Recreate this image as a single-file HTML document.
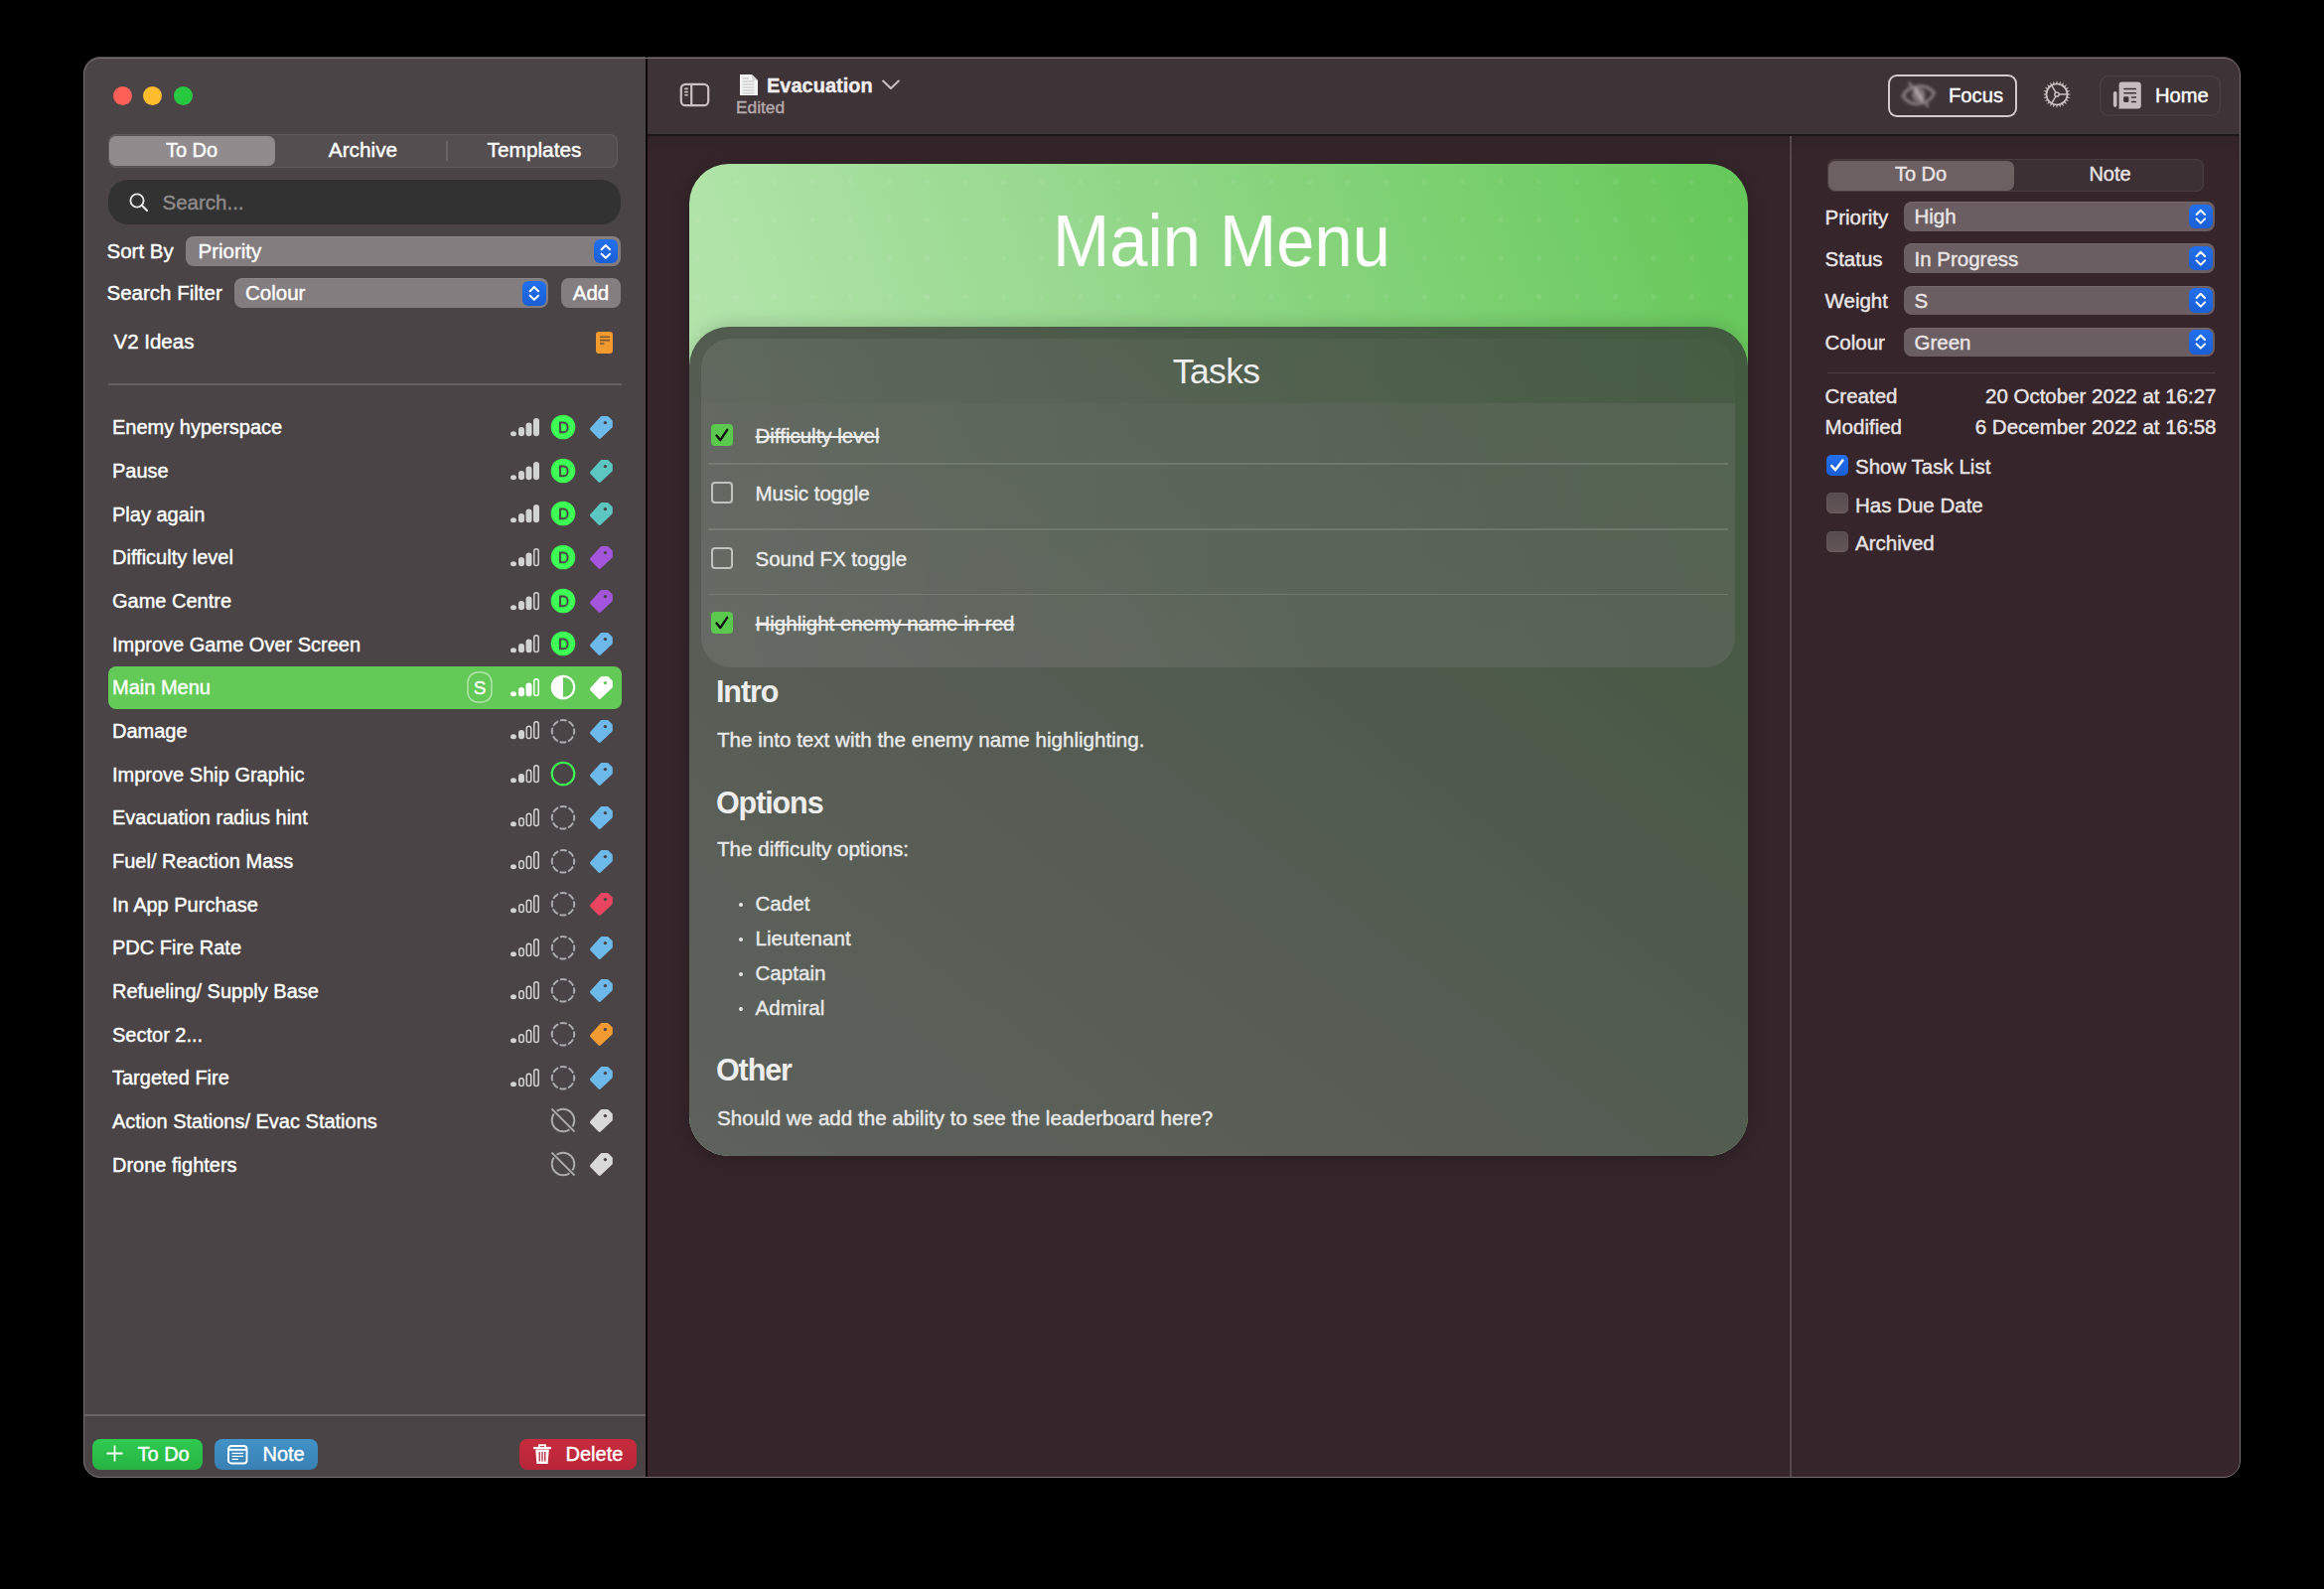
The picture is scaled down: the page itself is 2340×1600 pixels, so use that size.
<!DOCTYPE html>
<html><head><meta charset="utf-8"><style>
html,body{margin:0;padding:0;width:2340px;height:1600px;overflow:hidden;background:#000;}
body{position:relative;font-family:"Liberation Sans", sans-serif;}
.t{position:absolute;white-space:nowrap;-webkit-text-stroke:0.4px currentColor;}
svg{overflow:visible;}
</style></head><body>
<div style="position:absolute;left:84px;top:57px;width:2171px;height:1431px;border-radius:17px;overflow:hidden;background:#36262c;"><div style="position:absolute;left:0;top:0;width:566px;height:100%;background:#4a4446;"></div><div style="position:absolute;left:568px;top:0;right:0;height:78px;background:#3e3337;border-bottom:2px solid #1c1719;"></div><div style="position:absolute;left:568px;top:80px;right:0;height:22px;background:linear-gradient(rgba(0,0,0,0.10),rgba(0,0,0,0));"></div><div style="position:absolute;left:566px;top:0;width:2px;height:100%;background:#0a0809;"></div><div style="position:absolute;left:1718px;top:80px;width:1.5px;bottom:0;background:#54474d;"></div></div><div style="position:absolute;box-sizing:border-box;left:84.35px;top:57.65px;width:2171.2px;height:1430.5px;border-radius:17px;border:1.5px solid #7a7174;"></div><div style="position:absolute;left:114.00px;top:86.70px;width:19.00px;height:19.00px;border-radius:50%;background:#fe5f57;"></div><div style="position:absolute;left:144.40px;top:86.70px;width:19.00px;height:19.00px;border-radius:50%;background:#febc2e;"></div><div style="position:absolute;left:174.60px;top:86.70px;width:19.00px;height:19.00px;border-radius:50%;background:#28c840;"></div><div style="position:absolute;left:109.00px;top:135.00px;width:513.00px;height:34.00px;border-radius:8px;background:#554e51;box-shadow:inset 0 0 0 1px #625b5e;"></div><div style="position:absolute;left:110.00px;top:137.00px;width:167.00px;height:30.00px;border-radius:7px;background:#928b8d;"></div><div style="position:absolute;left:449.00px;top:142.00px;width:1.50px;height:20.00px;background:#6b6466;"></div><div class="t" style="left:193.00px;top:139.17px;font-size:20px;line-height:24px;color:#fff;font-weight:400;transform:translateX(-50%);">To Do</div><div class="t" style="left:365.50px;top:138.39px;font-size:20.8px;line-height:25px;color:#fff;font-weight:400;transform:translateX(-50%);">Archive</div><div class="t" style="left:538.00px;top:138.39px;font-size:20.8px;line-height:25px;color:#fff;font-weight:400;transform:translateX(-50%);">Templates</div><div style="position:absolute;left:109.00px;top:181.00px;width:516.00px;height:44.60px;border-radius:20px;background:#323232;"></div><svg style="position:absolute;left:128.00px;top:192.00px;" width="24" height="24" viewBox="0 0 24 24"><circle cx="10" cy="10" r="6.6" fill="none" stroke="#e6e6e6" stroke-width="1.9"/><line x1="14.8" y1="14.8" x2="20" y2="20" stroke="#e6e6e6" stroke-width="2.2" stroke-linecap="round"/></svg><div class="t" style="left:163.50px;top:191.49px;font-size:20.5px;line-height:25px;color:#8f8b8c;font-weight:400;">Search...</div><div class="t" style="left:107.50px;top:240.39px;font-size:20.5px;line-height:25px;color:#fff;font-weight:400;">Sort By</div><div style="position:absolute;left:187.30px;top:238.00px;width:437.70px;height:30.00px;border-radius:8px;background:#847d80;box-shadow:inset 0 1px 0 rgba(255,255,255,0.08);"></div><div style="position:absolute;left:598.00px;top:240.60px;width:23.70px;height:24.80px;border-radius:6px;background:linear-gradient(#2270ee,#1a5fd6);"></div><svg style="position:absolute;left:598.00px;top:240.60px;" width="24" height="25" viewBox="0 0 24 25"><path d="M7.6 10.20 L11.85 6.00 L16.1 10.20 M7.6 14.60 L11.85 18.80 L16.1 14.60" fill="none" stroke="#fff" stroke-width="2" stroke-linecap="round" stroke-linejoin="round"/></svg><div class="t" style="left:199.50px;top:239.89px;font-size:20.5px;line-height:25px;color:#fff;font-weight:400;">Priority</div><div class="t" style="left:107.50px;top:282.39px;font-size:20.5px;line-height:25px;color:#fff;font-weight:400;">Search Filter</div><div style="position:absolute;left:235.80px;top:280.30px;width:316.50px;height:30.00px;border-radius:8px;background:#847d80;box-shadow:inset 0 1px 0 rgba(255,255,255,0.08);"></div><div style="position:absolute;left:526.00px;top:282.90px;width:23.70px;height:24.80px;border-radius:6px;background:linear-gradient(#2270ee,#1a5fd6);"></div><svg style="position:absolute;left:526.00px;top:282.90px;" width="24" height="25" viewBox="0 0 24 25"><path d="M7.6 10.20 L11.85 6.00 L16.1 10.20 M7.6 14.60 L11.85 18.80 L16.1 14.60" fill="none" stroke="#fff" stroke-width="2" stroke-linecap="round" stroke-linejoin="round"/></svg><div class="t" style="left:247.00px;top:281.89px;font-size:20.5px;line-height:25px;color:#fff;font-weight:400;">Colour</div><div style="position:absolute;left:565.00px;top:280.30px;width:60.00px;height:30.00px;border-radius:8px;background:#857e81;"></div><div class="t" style="left:595.00px;top:281.89px;font-size:20.5px;line-height:25px;color:#fff;font-weight:400;transform:translateX(-50%);">Add</div><div class="t" style="left:114.50px;top:331.39px;font-size:20.5px;line-height:25px;color:#fff;font-weight:400;">V2 Ideas</div><div style="position:absolute;left:599.70px;top:333.50px;width:17.60px;height:22.00px;border-radius:3px;background:#f29a30;"></div><svg style="position:absolute;left:599.70px;top:333.50px;" width="18" height="22" viewBox="0 0 18 22"><path d="M4 5.2H14M4 8.6H14M4 12H8.5" stroke="#6b4a2c" stroke-width="1.6" opacity="0.85"/></svg><div style="position:absolute;left:109.00px;top:386.00px;width:516.60px;height:2.00px;background:#666063;"></div><div class="t" style="left:113.00px;top:418.47px;font-size:20px;line-height:24px;color:#fff;font-weight:400;">Enemy hyperspace</div><svg style="position:absolute;left:514.00px;top:420.90px;" width="30" height="18.30000000000001" viewBox="0 0 30 18.30000000000001"><ellipse cx="3" cy="15.70" rx="3" ry="2.5" fill="#d2d2d2"/><rect x="8" y="9.00" width="6" height="9.3" rx="3" fill="#d2d2d2"/><rect x="15.5" y="4.50" width="6" height="13.8" rx="3" fill="#d2d2d2"/><rect x="23" y="0.00" width="6" height="18.3" rx="3" fill="#d2d2d2"/></svg><svg style="position:absolute;left:554.00px;top:417.00px;" width="26" height="26" viewBox="0 0 26 26"><circle cx="13" cy="13" r="12.3" fill="#3dfc53"/><path d="M10.0 8.55h3.5a4.1 4.85 0 0 1 0 9.7h-3.5z" fill="none" stroke="#4a4446" stroke-width="1.9"/></svg><svg style="position:absolute;left:593.00px;top:418.00px;" width="25" height="25" viewBox="0 0 25 25"><path d="M12.84 3.00 L18.53 3.00 L21.90 6.30 L21.90 11.48 L10.75 21.94 L2.91 13.95Z" fill="#6cb9ea" stroke="#6cb9ea" stroke-width="3.8" stroke-linejoin="round"/><circle cx="16.4" cy="7.6" r="1.7" fill="#4a4446"/></svg><div class="t" style="left:113.00px;top:462.12px;font-size:20px;line-height:24px;color:#fff;font-weight:400;">Pause</div><svg style="position:absolute;left:514.00px;top:464.55px;" width="30" height="18.30000000000001" viewBox="0 0 30 18.30000000000001"><ellipse cx="3" cy="15.70" rx="3" ry="2.5" fill="#d2d2d2"/><rect x="8" y="9.00" width="6" height="9.3" rx="3" fill="#d2d2d2"/><rect x="15.5" y="4.50" width="6" height="13.8" rx="3" fill="#d2d2d2"/><rect x="23" y="0.00" width="6" height="18.3" rx="3" fill="#d2d2d2"/></svg><svg style="position:absolute;left:554.00px;top:460.65px;" width="26" height="26" viewBox="0 0 26 26"><circle cx="13" cy="13" r="12.3" fill="#3dfc53"/><path d="M10.0 8.55h3.5a4.1 4.85 0 0 1 0 9.7h-3.5z" fill="none" stroke="#4a4446" stroke-width="1.9"/></svg><svg style="position:absolute;left:593.00px;top:461.65px;" width="25" height="25" viewBox="0 0 25 25"><path d="M12.84 3.00 L18.53 3.00 L21.90 6.30 L21.90 11.48 L10.75 21.94 L2.91 13.95Z" fill="#5cc6c0" stroke="#5cc6c0" stroke-width="3.8" stroke-linejoin="round"/><circle cx="16.4" cy="7.6" r="1.7" fill="#4a4446"/></svg><div class="t" style="left:113.00px;top:505.77px;font-size:20px;line-height:24px;color:#fff;font-weight:400;">Play again</div><svg style="position:absolute;left:514.00px;top:508.20px;" width="30" height="18.299999999999955" viewBox="0 0 30 18.299999999999955"><ellipse cx="3" cy="15.70" rx="3" ry="2.5" fill="#d2d2d2"/><rect x="8" y="9.00" width="6" height="9.3" rx="3" fill="#d2d2d2"/><rect x="15.5" y="4.50" width="6" height="13.8" rx="3" fill="#d2d2d2"/><rect x="23" y="-0.00" width="6" height="18.3" rx="3" fill="#d2d2d2"/></svg><svg style="position:absolute;left:554.00px;top:504.30px;" width="26" height="26" viewBox="0 0 26 26"><circle cx="13" cy="13" r="12.3" fill="#3dfc53"/><path d="M10.0 8.55h3.5a4.1 4.85 0 0 1 0 9.7h-3.5z" fill="none" stroke="#4a4446" stroke-width="1.9"/></svg><svg style="position:absolute;left:593.00px;top:505.30px;" width="25" height="25" viewBox="0 0 25 25"><path d="M12.84 3.00 L18.53 3.00 L21.90 6.30 L21.90 11.48 L10.75 21.94 L2.91 13.95Z" fill="#5cc6c0" stroke="#5cc6c0" stroke-width="3.8" stroke-linejoin="round"/><circle cx="16.4" cy="7.6" r="1.7" fill="#4a4446"/></svg><div class="t" style="left:113.00px;top:549.42px;font-size:20px;line-height:24px;color:#fff;font-weight:400;">Difficulty level</div><svg style="position:absolute;left:514.00px;top:551.85px;" width="30" height="18.299999999999955" viewBox="0 0 30 18.299999999999955"><ellipse cx="3" cy="15.70" rx="3" ry="2.5" fill="#d2d2d2"/><rect x="8" y="9.00" width="6" height="9.3" rx="3" fill="#d2d2d2"/><rect x="15.5" y="4.50" width="6" height="13.8" rx="3" fill="#d2d2d2"/><rect x="23.75" y="0.75" width="4.5" height="16.8" rx="2.25" fill="none" stroke="#d2d2d2" stroke-width="1.5"/></svg><svg style="position:absolute;left:554.00px;top:547.95px;" width="26" height="26" viewBox="0 0 26 26"><circle cx="13" cy="13" r="12.3" fill="#3dfc53"/><path d="M10.0 8.55h3.5a4.1 4.85 0 0 1 0 9.7h-3.5z" fill="none" stroke="#4a4446" stroke-width="1.9"/></svg><svg style="position:absolute;left:593.00px;top:548.95px;" width="25" height="25" viewBox="0 0 25 25"><path d="M12.84 3.00 L18.53 3.00 L21.90 6.30 L21.90 11.48 L10.75 21.94 L2.91 13.95Z" fill="#a355dc" stroke="#a355dc" stroke-width="3.8" stroke-linejoin="round"/><circle cx="16.4" cy="7.6" r="1.7" fill="#4a4446"/></svg><div class="t" style="left:113.00px;top:593.07px;font-size:20px;line-height:24px;color:#fff;font-weight:400;">Game Centre</div><svg style="position:absolute;left:514.00px;top:595.50px;" width="30" height="18.299999999999955" viewBox="0 0 30 18.299999999999955"><ellipse cx="3" cy="15.70" rx="3" ry="2.5" fill="#d2d2d2"/><rect x="8" y="9.00" width="6" height="9.3" rx="3" fill="#d2d2d2"/><rect x="15.5" y="4.50" width="6" height="13.8" rx="3" fill="#d2d2d2"/><rect x="23.75" y="0.75" width="4.5" height="16.8" rx="2.25" fill="none" stroke="#d2d2d2" stroke-width="1.5"/></svg><svg style="position:absolute;left:554.00px;top:591.60px;" width="26" height="26" viewBox="0 0 26 26"><circle cx="13" cy="13" r="12.3" fill="#3dfc53"/><path d="M10.0 8.55h3.5a4.1 4.85 0 0 1 0 9.7h-3.5z" fill="none" stroke="#4a4446" stroke-width="1.9"/></svg><svg style="position:absolute;left:593.00px;top:592.60px;" width="25" height="25" viewBox="0 0 25 25"><path d="M12.84 3.00 L18.53 3.00 L21.90 6.30 L21.90 11.48 L10.75 21.94 L2.91 13.95Z" fill="#a355dc" stroke="#a355dc" stroke-width="3.8" stroke-linejoin="round"/><circle cx="16.4" cy="7.6" r="1.7" fill="#4a4446"/></svg><div class="t" style="left:113.00px;top:636.72px;font-size:20px;line-height:24px;color:#fff;font-weight:400;">Improve Game Over Screen</div><svg style="position:absolute;left:514.00px;top:639.15px;" width="30" height="18.299999999999955" viewBox="0 0 30 18.299999999999955"><ellipse cx="3" cy="15.70" rx="3" ry="2.5" fill="#d2d2d2"/><rect x="8" y="9.00" width="6" height="9.3" rx="3" fill="#d2d2d2"/><rect x="15.5" y="4.50" width="6" height="13.8" rx="3" fill="#d2d2d2"/><rect x="23.75" y="0.75" width="4.5" height="16.8" rx="2.25" fill="none" stroke="#d2d2d2" stroke-width="1.5"/></svg><svg style="position:absolute;left:554.00px;top:635.25px;" width="26" height="26" viewBox="0 0 26 26"><circle cx="13" cy="13" r="12.3" fill="#3dfc53"/><path d="M10.0 8.55h3.5a4.1 4.85 0 0 1 0 9.7h-3.5z" fill="none" stroke="#4a4446" stroke-width="1.9"/></svg><svg style="position:absolute;left:593.00px;top:636.25px;" width="25" height="25" viewBox="0 0 25 25"><path d="M12.84 3.00 L18.53 3.00 L21.90 6.30 L21.90 11.48 L10.75 21.94 L2.91 13.95Z" fill="#6cb9ea" stroke="#6cb9ea" stroke-width="3.8" stroke-linejoin="round"/><circle cx="16.4" cy="7.6" r="1.7" fill="#4a4446"/></svg><div style="position:absolute;left:109.00px;top:670.60px;width:516.80px;height:43.60px;border-radius:8px;background:#63c957;"></div><svg style="position:absolute;left:470.00px;top:676.30px;" width="26" height="32" viewBox="0 0 26 32"><rect x="1" y="1" width="24" height="30" rx="10" fill="none" stroke="rgba(255,255,255,0.5)" stroke-width="1.5"/></svg><div class="t" style="left:483.00px;top:681.21px;font-size:19px;line-height:23px;color:#fff;font-weight:400;transform:translateX(-50%);">S</div><div class="t" style="left:113.00px;top:680.37px;font-size:20px;line-height:24px;color:#fff;font-weight:400;">Main Menu</div><svg style="position:absolute;left:514.00px;top:682.80px;" width="30" height="18.299999999999955" viewBox="0 0 30 18.299999999999955"><ellipse cx="3" cy="15.70" rx="3" ry="2.5" fill="#ffffff"/><rect x="8" y="9.00" width="6" height="9.3" rx="3" fill="#ffffff"/><rect x="15.5" y="4.50" width="6" height="13.8" rx="3" fill="#ffffff"/><rect x="23.75" y="0.75" width="4.5" height="16.8" rx="2.25" fill="none" stroke="#ffffff" stroke-width="1.5"/></svg><svg style="position:absolute;left:554.00px;top:678.90px;" width="26" height="26" viewBox="0 0 26 26"><circle cx="13" cy="13" r="11.2" fill="none" stroke="#fff" stroke-width="2.2"/><path d="M13 1.8 A11.2 11.2 0 0 0 13 24.2 Z" fill="#fff"/></svg><svg style="position:absolute;left:593.00px;top:679.90px;" width="25" height="25" viewBox="0 0 25 25"><path d="M12.84 3.00 L18.53 3.00 L21.90 6.30 L21.90 11.48 L10.75 21.94 L2.91 13.95Z" fill="#ffffff" stroke="#ffffff" stroke-width="3.8" stroke-linejoin="round"/><circle cx="16.4" cy="7.6" r="1.7" fill="#63c957"/></svg><div class="t" style="left:113.00px;top:724.02px;font-size:20px;line-height:24px;color:#fff;font-weight:400;">Damage</div><svg style="position:absolute;left:514.00px;top:726.45px;" width="30" height="18.299999999999955" viewBox="0 0 30 18.299999999999955"><ellipse cx="3" cy="15.70" rx="3" ry="2.5" fill="#d2d2d2"/><rect x="8" y="9.00" width="6" height="9.3" rx="3" fill="#d2d2d2"/><rect x="16.25" y="5.25" width="4.5" height="12.3" rx="2.25" fill="none" stroke="#d2d2d2" stroke-width="1.5"/><rect x="23.75" y="0.75" width="4.5" height="16.8" rx="2.25" fill="none" stroke="#d2d2d2" stroke-width="1.5"/></svg><svg style="position:absolute;left:554.00px;top:722.55px;" width="26" height="26" viewBox="0 0 26 26"><circle cx="13" cy="13.3" r="11.2" fill="none" stroke="#ababaf" stroke-width="2" stroke-linecap="round" stroke-dasharray="5.3 3.496" stroke-dashoffset="2.65"/></svg><svg style="position:absolute;left:593.00px;top:723.55px;" width="25" height="25" viewBox="0 0 25 25"><path d="M12.84 3.00 L18.53 3.00 L21.90 6.30 L21.90 11.48 L10.75 21.94 L2.91 13.95Z" fill="#6cb9ea" stroke="#6cb9ea" stroke-width="3.8" stroke-linejoin="round"/><circle cx="16.4" cy="7.6" r="1.7" fill="#4a4446"/></svg><div class="t" style="left:113.00px;top:767.67px;font-size:20px;line-height:24px;color:#fff;font-weight:400;">Improve Ship Graphic</div><svg style="position:absolute;left:514.00px;top:770.10px;" width="30" height="18.299999999999955" viewBox="0 0 30 18.299999999999955"><ellipse cx="3" cy="15.70" rx="3" ry="2.5" fill="#d2d2d2"/><rect x="8" y="9.00" width="6" height="9.3" rx="3" fill="#d2d2d2"/><rect x="16.25" y="5.25" width="4.5" height="12.3" rx="2.25" fill="none" stroke="#d2d2d2" stroke-width="1.5"/><rect x="23.75" y="0.75" width="4.5" height="16.8" rx="2.25" fill="none" stroke="#d2d2d2" stroke-width="1.5"/></svg><svg style="position:absolute;left:554.00px;top:766.20px;" width="26" height="26" viewBox="0 0 26 26"><circle cx="13" cy="13" r="11.3" fill="none" stroke="#3dfc53" stroke-width="2.1"/></svg><svg style="position:absolute;left:593.00px;top:767.20px;" width="25" height="25" viewBox="0 0 25 25"><path d="M12.84 3.00 L18.53 3.00 L21.90 6.30 L21.90 11.48 L10.75 21.94 L2.91 13.95Z" fill="#6cb9ea" stroke="#6cb9ea" stroke-width="3.8" stroke-linejoin="round"/><circle cx="16.4" cy="7.6" r="1.7" fill="#4a4446"/></svg><div class="t" style="left:113.00px;top:811.32px;font-size:20px;line-height:24px;color:#fff;font-weight:400;">Evacuation radius hint</div><svg style="position:absolute;left:514.00px;top:813.75px;" width="30" height="18.299999999999955" viewBox="0 0 30 18.299999999999955"><ellipse cx="3" cy="15.70" rx="3" ry="2.5" fill="#d2d2d2"/><rect x="8.75" y="9.75" width="4.5" height="7.800000000000001" rx="2.25" fill="none" stroke="#d2d2d2" stroke-width="1.5"/><rect x="16.25" y="5.25" width="4.5" height="12.3" rx="2.25" fill="none" stroke="#d2d2d2" stroke-width="1.5"/><rect x="23.75" y="0.75" width="4.5" height="16.8" rx="2.25" fill="none" stroke="#d2d2d2" stroke-width="1.5"/></svg><svg style="position:absolute;left:554.00px;top:809.85px;" width="26" height="26" viewBox="0 0 26 26"><circle cx="13" cy="13.3" r="11.2" fill="none" stroke="#ababaf" stroke-width="2" stroke-linecap="round" stroke-dasharray="5.3 3.496" stroke-dashoffset="2.65"/></svg><svg style="position:absolute;left:593.00px;top:810.85px;" width="25" height="25" viewBox="0 0 25 25"><path d="M12.84 3.00 L18.53 3.00 L21.90 6.30 L21.90 11.48 L10.75 21.94 L2.91 13.95Z" fill="#6cb9ea" stroke="#6cb9ea" stroke-width="3.8" stroke-linejoin="round"/><circle cx="16.4" cy="7.6" r="1.7" fill="#4a4446"/></svg><div class="t" style="left:113.00px;top:854.97px;font-size:20px;line-height:24px;color:#fff;font-weight:400;">Fuel/ Reaction Mass</div><svg style="position:absolute;left:514.00px;top:857.40px;" width="30" height="18.299999999999955" viewBox="0 0 30 18.299999999999955"><ellipse cx="3" cy="15.70" rx="3" ry="2.5" fill="#d2d2d2"/><rect x="8.75" y="9.75" width="4.5" height="7.800000000000001" rx="2.25" fill="none" stroke="#d2d2d2" stroke-width="1.5"/><rect x="16.25" y="5.25" width="4.5" height="12.3" rx="2.25" fill="none" stroke="#d2d2d2" stroke-width="1.5"/><rect x="23.75" y="0.75" width="4.5" height="16.8" rx="2.25" fill="none" stroke="#d2d2d2" stroke-width="1.5"/></svg><svg style="position:absolute;left:554.00px;top:853.50px;" width="26" height="26" viewBox="0 0 26 26"><circle cx="13" cy="13.3" r="11.2" fill="none" stroke="#ababaf" stroke-width="2" stroke-linecap="round" stroke-dasharray="5.3 3.496" stroke-dashoffset="2.65"/></svg><svg style="position:absolute;left:593.00px;top:854.50px;" width="25" height="25" viewBox="0 0 25 25"><path d="M12.84 3.00 L18.53 3.00 L21.90 6.30 L21.90 11.48 L10.75 21.94 L2.91 13.95Z" fill="#6cb9ea" stroke="#6cb9ea" stroke-width="3.8" stroke-linejoin="round"/><circle cx="16.4" cy="7.6" r="1.7" fill="#4a4446"/></svg><div class="t" style="left:113.00px;top:898.62px;font-size:20px;line-height:24px;color:#fff;font-weight:400;">In App Purchase</div><svg style="position:absolute;left:514.00px;top:901.05px;" width="30" height="18.299999999999955" viewBox="0 0 30 18.299999999999955"><ellipse cx="3" cy="15.70" rx="3" ry="2.5" fill="#d2d2d2"/><rect x="8.75" y="9.75" width="4.5" height="7.800000000000001" rx="2.25" fill="none" stroke="#d2d2d2" stroke-width="1.5"/><rect x="16.25" y="5.25" width="4.5" height="12.3" rx="2.25" fill="none" stroke="#d2d2d2" stroke-width="1.5"/><rect x="23.75" y="0.75" width="4.5" height="16.8" rx="2.25" fill="none" stroke="#d2d2d2" stroke-width="1.5"/></svg><svg style="position:absolute;left:554.00px;top:897.15px;" width="26" height="26" viewBox="0 0 26 26"><circle cx="13" cy="13.3" r="11.2" fill="none" stroke="#ababaf" stroke-width="2" stroke-linecap="round" stroke-dasharray="5.3 3.496" stroke-dashoffset="2.65"/></svg><svg style="position:absolute;left:593.00px;top:898.15px;" width="25" height="25" viewBox="0 0 25 25"><path d="M12.84 3.00 L18.53 3.00 L21.90 6.30 L21.90 11.48 L10.75 21.94 L2.91 13.95Z" fill="#ea4560" stroke="#ea4560" stroke-width="3.8" stroke-linejoin="round"/><circle cx="16.4" cy="7.6" r="1.7" fill="#4a4446"/></svg><div class="t" style="left:113.00px;top:942.27px;font-size:20px;line-height:24px;color:#fff;font-weight:400;">PDC Fire Rate</div><svg style="position:absolute;left:514.00px;top:944.70px;" width="30" height="18.299999999999955" viewBox="0 0 30 18.299999999999955"><ellipse cx="3" cy="15.70" rx="3" ry="2.5" fill="#d2d2d2"/><rect x="8.75" y="9.75" width="4.5" height="7.800000000000001" rx="2.25" fill="none" stroke="#d2d2d2" stroke-width="1.5"/><rect x="16.25" y="5.25" width="4.5" height="12.3" rx="2.25" fill="none" stroke="#d2d2d2" stroke-width="1.5"/><rect x="23.75" y="0.75" width="4.5" height="16.8" rx="2.25" fill="none" stroke="#d2d2d2" stroke-width="1.5"/></svg><svg style="position:absolute;left:554.00px;top:940.80px;" width="26" height="26" viewBox="0 0 26 26"><circle cx="13" cy="13.3" r="11.2" fill="none" stroke="#ababaf" stroke-width="2" stroke-linecap="round" stroke-dasharray="5.3 3.496" stroke-dashoffset="2.65"/></svg><svg style="position:absolute;left:593.00px;top:941.80px;" width="25" height="25" viewBox="0 0 25 25"><path d="M12.84 3.00 L18.53 3.00 L21.90 6.30 L21.90 11.48 L10.75 21.94 L2.91 13.95Z" fill="#6cb9ea" stroke="#6cb9ea" stroke-width="3.8" stroke-linejoin="round"/><circle cx="16.4" cy="7.6" r="1.7" fill="#4a4446"/></svg><div class="t" style="left:113.00px;top:985.92px;font-size:20px;line-height:24px;color:#fff;font-weight:400;">Refueling/ Supply Base</div><svg style="position:absolute;left:514.00px;top:988.35px;" width="30" height="18.299999999999955" viewBox="0 0 30 18.299999999999955"><ellipse cx="3" cy="15.70" rx="3" ry="2.5" fill="#d2d2d2"/><rect x="8.75" y="9.75" width="4.5" height="7.800000000000001" rx="2.25" fill="none" stroke="#d2d2d2" stroke-width="1.5"/><rect x="16.25" y="5.25" width="4.5" height="12.3" rx="2.25" fill="none" stroke="#d2d2d2" stroke-width="1.5"/><rect x="23.75" y="0.75" width="4.5" height="16.8" rx="2.25" fill="none" stroke="#d2d2d2" stroke-width="1.5"/></svg><svg style="position:absolute;left:554.00px;top:984.45px;" width="26" height="26" viewBox="0 0 26 26"><circle cx="13" cy="13.3" r="11.2" fill="none" stroke="#ababaf" stroke-width="2" stroke-linecap="round" stroke-dasharray="5.3 3.496" stroke-dashoffset="2.65"/></svg><svg style="position:absolute;left:593.00px;top:985.45px;" width="25" height="25" viewBox="0 0 25 25"><path d="M12.84 3.00 L18.53 3.00 L21.90 6.30 L21.90 11.48 L10.75 21.94 L2.91 13.95Z" fill="#6cb9ea" stroke="#6cb9ea" stroke-width="3.8" stroke-linejoin="round"/><circle cx="16.4" cy="7.6" r="1.7" fill="#4a4446"/></svg><div class="t" style="left:113.00px;top:1029.57px;font-size:20px;line-height:24px;color:#fff;font-weight:400;">Sector 2...</div><svg style="position:absolute;left:514.00px;top:1032.00px;" width="30" height="18.299999999999955" viewBox="0 0 30 18.299999999999955"><ellipse cx="3" cy="15.70" rx="3" ry="2.5" fill="#d2d2d2"/><rect x="8.75" y="9.75" width="4.5" height="7.800000000000001" rx="2.25" fill="none" stroke="#d2d2d2" stroke-width="1.5"/><rect x="16.25" y="5.25" width="4.5" height="12.3" rx="2.25" fill="none" stroke="#d2d2d2" stroke-width="1.5"/><rect x="23.75" y="0.75" width="4.5" height="16.8" rx="2.25" fill="none" stroke="#d2d2d2" stroke-width="1.5"/></svg><svg style="position:absolute;left:554.00px;top:1028.10px;" width="26" height="26" viewBox="0 0 26 26"><circle cx="13" cy="13.3" r="11.2" fill="none" stroke="#ababaf" stroke-width="2" stroke-linecap="round" stroke-dasharray="5.3 3.496" stroke-dashoffset="2.65"/></svg><svg style="position:absolute;left:593.00px;top:1029.10px;" width="25" height="25" viewBox="0 0 25 25"><path d="M12.84 3.00 L18.53 3.00 L21.90 6.30 L21.90 11.48 L10.75 21.94 L2.91 13.95Z" fill="#f29b32" stroke="#f29b32" stroke-width="3.8" stroke-linejoin="round"/><circle cx="16.4" cy="7.6" r="1.7" fill="#4a4446"/></svg><div class="t" style="left:113.00px;top:1073.22px;font-size:20px;line-height:24px;color:#fff;font-weight:400;">Targeted Fire</div><svg style="position:absolute;left:514.00px;top:1075.65px;" width="30" height="18.299999999999955" viewBox="0 0 30 18.299999999999955"><ellipse cx="3" cy="15.70" rx="3" ry="2.5" fill="#d2d2d2"/><rect x="8.75" y="9.75" width="4.5" height="7.800000000000001" rx="2.25" fill="none" stroke="#d2d2d2" stroke-width="1.5"/><rect x="16.25" y="5.25" width="4.5" height="12.3" rx="2.25" fill="none" stroke="#d2d2d2" stroke-width="1.5"/><rect x="23.75" y="0.75" width="4.5" height="16.8" rx="2.25" fill="none" stroke="#d2d2d2" stroke-width="1.5"/></svg><svg style="position:absolute;left:554.00px;top:1071.75px;" width="26" height="26" viewBox="0 0 26 26"><circle cx="13" cy="13.3" r="11.2" fill="none" stroke="#ababaf" stroke-width="2" stroke-linecap="round" stroke-dasharray="5.3 3.496" stroke-dashoffset="2.65"/></svg><svg style="position:absolute;left:593.00px;top:1072.75px;" width="25" height="25" viewBox="0 0 25 25"><path d="M12.84 3.00 L18.53 3.00 L21.90 6.30 L21.90 11.48 L10.75 21.94 L2.91 13.95Z" fill="#6cb9ea" stroke="#6cb9ea" stroke-width="3.8" stroke-linejoin="round"/><circle cx="16.4" cy="7.6" r="1.7" fill="#4a4446"/></svg><div class="t" style="left:113.00px;top:1116.87px;font-size:20px;line-height:24px;color:#fff;font-weight:400;">Action Stations/ Evac Stations</div><svg style="position:absolute;left:554.00px;top:1115.40px;" width="26" height="26" viewBox="0 0 26 26"><circle cx="13" cy="13" r="11.3" fill="none" stroke="#aeabac" stroke-width="1.9"/><line x1="2" y1="2" x2="24" y2="24" stroke="#4a4446" stroke-width="4"/><line x1="1.5" y1="1.5" x2="24.5" y2="24.5" stroke="#aeabac" stroke-width="1.8"/></svg><svg style="position:absolute;left:593.00px;top:1116.40px;" width="25" height="25" viewBox="0 0 25 25"><path d="M12.84 3.00 L18.53 3.00 L21.90 6.30 L21.90 11.48 L10.75 21.94 L2.91 13.95Z" fill="#d9d9d9" stroke="#d9d9d9" stroke-width="3.8" stroke-linejoin="round"/><circle cx="16.4" cy="7.6" r="1.7" fill="#4a4446"/></svg><div class="t" style="left:113.00px;top:1160.52px;font-size:20px;line-height:24px;color:#fff;font-weight:400;">Drone fighters</div><svg style="position:absolute;left:554.00px;top:1159.05px;" width="26" height="26" viewBox="0 0 26 26"><circle cx="13" cy="13" r="11.3" fill="none" stroke="#aeabac" stroke-width="1.9"/><line x1="2" y1="2" x2="24" y2="24" stroke="#4a4446" stroke-width="4"/><line x1="1.5" y1="1.5" x2="24.5" y2="24.5" stroke="#aeabac" stroke-width="1.8"/></svg><svg style="position:absolute;left:593.00px;top:1160.05px;" width="25" height="25" viewBox="0 0 25 25"><path d="M12.84 3.00 L18.53 3.00 L21.90 6.30 L21.90 11.48 L10.75 21.94 L2.91 13.95Z" fill="#d9d9d9" stroke="#d9d9d9" stroke-width="3.8" stroke-linejoin="round"/><circle cx="16.4" cy="7.6" r="1.7" fill="#4a4446"/></svg><div style="position:absolute;left:84.00px;top:1423.50px;width:566.00px;height:2.00px;background:#6b6467;"></div><div style="position:absolute;left:93.00px;top:1449.00px;width:111.00px;height:30.60px;border-radius:8px;background:linear-gradient(#2fcb50,#27b343);"></div><svg style="position:absolute;left:106.00px;top:1454.00px;" width="19" height="19" viewBox="0 0 19 19"><path d="M9.5 1.5V17.5M1.5 9.5H17.5" stroke="#fff" stroke-width="1.8"/></svg><div class="t" style="left:138.50px;top:1451.57px;font-size:20px;line-height:24px;color:#fff;font-weight:400;">To Do</div><div style="position:absolute;left:215.70px;top:1449.00px;width:104.30px;height:30.60px;border-radius:8px;background:linear-gradient(#4193c8,#3880b3);"></div><svg style="position:absolute;left:229.00px;top:1454.50px;" width="21" height="19" viewBox="0 0 21 19"><rect x="1" y="1" width="18.5" height="17.5" rx="3" fill="none" stroke="#fff" stroke-width="1.9"/><path d="M1 4.8H19.5" stroke="#fff" stroke-width="1.9"/><path d="M4.5 8.3H16M4.5 11.3H16M4.5 14.3H11" stroke="#fff" stroke-width="1.3"/></svg><div class="t" style="left:264.50px;top:1451.57px;font-size:20px;line-height:24px;color:#fff;font-weight:400;">Note</div><div style="position:absolute;left:522.70px;top:1449.00px;width:118.30px;height:30.60px;border-radius:8px;background:linear-gradient(#c82b3e,#b82538);"></div><svg style="position:absolute;left:535.00px;top:1453.00px;" width="22" height="23" viewBox="0 0 22 23"><path d="M2 5H20" stroke="#fff" stroke-width="2.2"/><path d="M8 4.5V2.2H14V4.5" fill="none" stroke="#fff" stroke-width="1.8"/><path d="M4.2 6.5L5.4 21H16.6L17.8 6.5Z" fill="#fff"/><path d="M8.2 9V18.5M11 9V18.5M13.8 9V18.5" stroke="#b92639" stroke-width="1.3"/></svg><div class="t" style="left:569.50px;top:1451.57px;font-size:20px;line-height:24px;color:#fff;font-weight:400;">Delete</div><svg style="position:absolute;left:684.00px;top:83.00px;" width="32" height="26" viewBox="0 0 32 26"><rect x="1.8" y="1.8" width="27.4" height="21.4" rx="4.5" fill="none" stroke="#cbbfc1" stroke-width="2.2"/><path d="M12.2 2V23" stroke="#cbbfc1" stroke-width="2.2"/><path d="M5.2 6.4H8.8M5.2 9.6H8.8M5.2 12.8H8.8" stroke="#cbbfc1" stroke-width="1.6"/></svg><svg style="position:absolute;left:744.00px;top:74.00px;" width="20" height="23" viewBox="0 0 20 23"><path d="M1 1H13L19 7V22H1Z" fill="#f4f4f4"/><path d="M13 1V7H19" fill="#d8d8d8"/><path d="M3.5 5H10M3.5 8H15.5M3.5 11H15.5M3.5 14H15.5M3.5 17H15.5M3.5 20H15.5" stroke="#b9b9b9" stroke-width="0.9"/></svg><div class="t" style="left:772.00px;top:74.27px;font-size:20px;line-height:24px;color:#f2eeef;font-weight:700;-webkit-text-stroke:0.35px currentColor;">Evacuation</div><svg style="position:absolute;left:887.00px;top:79.00px;" width="20" height="14" viewBox="0 0 20 14"><path d="M2.2 2.5L10 10L17.8 2.5" fill="none" stroke="#c9bfc1" stroke-width="2.1" stroke-linecap="round" stroke-linejoin="round"/></svg><div class="t" style="left:741.00px;top:97.80px;font-size:17.3px;line-height:21px;color:#b5abad;font-weight:400;">Edited</div><div style="position:absolute;left:1900.80px;top:74.80px;width:130.10px;height:42.90px;border-radius:9px;box-shadow:inset 0 0 0 2px #d2cacc;"></div><svg style="position:absolute;left:1910.00px;top:79.00px;" width="44" height="34" viewBox="0 0 44 34"><defs><filter id="bl" x="-30%" y="-30%" width="160%" height="160%"><feGaussianBlur stdDeviation="1.5"/></filter></defs><g filter="url(#bl)"><path d="M6 17.5 C11.5 6.5, 29 4, 37.5 14.5 C33 26.5, 14 30.5, 6 17.5Z" fill="none" stroke="#8c8084" stroke-width="3"/><circle cx="21.8" cy="16.5" r="5.6" fill="#766a6e" stroke="#8c8084" stroke-width="2"/><path d="M18.5 11 L25.5 22" stroke="#b2a6aa" stroke-width="3.4" stroke-linecap="round"/><path d="M12.5 4.5 L15.5 9.5 M28.5 23.5 L31 28" stroke="#8c8084" stroke-width="2.6" stroke-linecap="round"/></g></svg><div class="t" style="left:1962.00px;top:84.20px;font-size:20.2px;line-height:24px;color:#ffffff;font-weight:400;">Focus</div><svg style="position:absolute;left:2056.10px;top:80.30px;" width="30" height="30" viewBox="0 0 30 30"><g transform="translate(15,15)"><path d="M10.55 -1.02L14.10 0.00L10.55 1.02ZM10.45 1.75L13.62 3.65L9.93 3.71ZM9.65 4.40L12.21 7.05L8.63 6.16ZM8.18 6.74L9.97 9.97L6.74 8.18ZM6.16 8.63L7.05 12.21L4.40 9.65ZM3.71 9.93L3.65 13.62L1.75 10.45ZM1.02 10.55L0.00 14.10L-1.02 10.55ZM-1.75 10.45L-3.65 13.62L-3.71 9.93ZM-4.40 9.65L-7.05 12.21L-6.16 8.63ZM-6.74 8.18L-9.97 9.97L-8.18 6.74ZM-8.63 6.16L-12.21 7.05L-9.65 4.40ZM-9.93 3.71L-13.62 3.65L-10.45 1.75ZM-10.55 1.02L-14.10 0.00L-10.55 -1.02ZM-10.45 -1.75L-13.62 -3.65L-9.93 -3.71ZM-9.65 -4.40L-12.21 -7.05L-8.63 -6.16ZM-8.18 -6.74L-9.97 -9.97L-6.74 -8.18ZM-6.16 -8.63L-7.05 -12.21L-4.40 -9.65ZM-3.71 -9.93L-3.65 -13.62L-1.75 -10.45ZM-1.02 -10.55L-0.00 -14.10L1.02 -10.55ZM1.75 -10.45L3.65 -13.62L3.71 -9.93ZM4.40 -9.65L7.05 -12.21L6.16 -8.63ZM6.74 -8.18L9.97 -9.97L8.18 -6.74ZM8.63 -6.16L12.21 -7.05L9.65 -4.40ZM9.93 -3.71L13.62 -3.65L10.45 -1.75Z" fill="#cbbfc1"/><circle r="10.5" fill="none" stroke="#cbbfc1" stroke-width="1.7"/><circle r="2.1" fill="none" stroke="#cbbfc1" stroke-width="1.5"/><path d="M2.10 0.00L10.30 0.00" stroke="#cbbfc1" stroke-width="1.5"/><path d="M-1.05 1.82L-5.15 8.92" stroke="#cbbfc1" stroke-width="1.5"/><path d="M-1.05 -1.82L-5.15 -8.92" stroke="#cbbfc1" stroke-width="1.5"/></g></svg><div style="position:absolute;left:2113.50px;top:75.80px;width:122.90px;height:41.30px;border-radius:9px;box-shadow:inset 0 0 0 1.5px #4b3f45;"></div><svg style="position:absolute;left:2127.00px;top:81.00px;" width="30" height="30" viewBox="0 0 30 30"><path d="M9.5 1.5H25.5Q28.8 1.5 28.8 4.8V25.2Q28.8 28.5 25.5 28.5H6.2Q6.6 27.6 6.6 26V4.6Q6.6 1.5 9.5 1.5Z" fill="#c6bbbe"/><rect x="0.9" y="10.9" width="3.6" height="16" rx="1.8" fill="#c6bbbe"/><path d="M11.9 8.4H23.4M11.9 12.65H23.4M19.5 17.1H23.4M19.5 21.4H23.4" stroke="#3e3237" stroke-width="1.5" stroke-linecap="round"/><rect x="11.1" y="16.2" width="5.3" height="5.7" rx="1.3" fill="#3e3237"/></svg><div class="t" style="left:2170.00px;top:84.20px;font-size:20.2px;line-height:24px;color:#ffffff;font-weight:400;">Home</div><div style="position:absolute;left:1840.00px;top:160.00px;width:379.00px;height:32.50px;border-radius:8px;background:#3d3035;box-shadow:inset 0 0 0 1px #4b3e43;"></div><div style="position:absolute;left:1841.00px;top:161.50px;width:187.00px;height:30.00px;border-radius:7px;background:#6c6063;"></div><div class="t" style="left:1934.00px;top:163.27px;font-size:20px;line-height:24px;color:#eae4e5;font-weight:400;transform:translateX(-50%);">To Do</div><div class="t" style="left:2124.50px;top:163.27px;font-size:20px;line-height:24px;color:#eae4e5;font-weight:400;transform:translateX(-50%);">Note</div><div class="t" style="left:1837.50px;top:205.79px;font-size:20.5px;line-height:25px;color:#ebe6e7;font-weight:400;">Priority</div><div style="position:absolute;left:1917.00px;top:203.20px;width:313.00px;height:29.60px;border-radius:8px;background:#6a5e62;box-shadow:inset 0 1px 0 rgba(255,255,255,0.08);"></div><div style="position:absolute;left:2204.00px;top:205.80px;width:23.70px;height:24.40px;border-radius:6px;background:linear-gradient(#2270ee,#1a5fd6);"></div><svg style="position:absolute;left:2204.00px;top:205.80px;" width="24" height="24" viewBox="0 0 24 24"><path d="M7.6 10.00 L11.85 5.80 L16.1 10.00 M7.6 14.40 L11.85 18.60 L16.1 14.40" fill="none" stroke="#fff" stroke-width="2" stroke-linecap="round" stroke-linejoin="round"/></svg><div class="t" style="left:1927.50px;top:205.39px;font-size:20.5px;line-height:25px;color:#ebe6e7;font-weight:400;">High</div><div class="t" style="left:1837.50px;top:247.99px;font-size:20.5px;line-height:25px;color:#ebe6e7;font-weight:400;">Status</div><div style="position:absolute;left:1917.00px;top:245.40px;width:313.00px;height:29.60px;border-radius:8px;background:#6a5e62;box-shadow:inset 0 1px 0 rgba(255,255,255,0.08);"></div><div style="position:absolute;left:2204.00px;top:248.00px;width:23.70px;height:24.40px;border-radius:6px;background:linear-gradient(#2270ee,#1a5fd6);"></div><svg style="position:absolute;left:2204.00px;top:248.00px;" width="24" height="24" viewBox="0 0 24 24"><path d="M7.6 10.00 L11.85 5.80 L16.1 10.00 M7.6 14.40 L11.85 18.60 L16.1 14.40" fill="none" stroke="#fff" stroke-width="2" stroke-linecap="round" stroke-linejoin="round"/></svg><div class="t" style="left:1927.50px;top:247.59px;font-size:20.5px;line-height:25px;color:#ebe6e7;font-weight:400;">In Progress</div><div class="t" style="left:1837.50px;top:290.19px;font-size:20.5px;line-height:25px;color:#ebe6e7;font-weight:400;">Weight</div><div style="position:absolute;left:1917.00px;top:287.60px;width:313.00px;height:29.60px;border-radius:8px;background:#6a5e62;box-shadow:inset 0 1px 0 rgba(255,255,255,0.08);"></div><div style="position:absolute;left:2204.00px;top:290.20px;width:23.70px;height:24.40px;border-radius:6px;background:linear-gradient(#2270ee,#1a5fd6);"></div><svg style="position:absolute;left:2204.00px;top:290.20px;" width="24" height="24" viewBox="0 0 24 24"><path d="M7.6 10.00 L11.85 5.80 L16.1 10.00 M7.6 14.40 L11.85 18.60 L16.1 14.40" fill="none" stroke="#fff" stroke-width="2" stroke-linecap="round" stroke-linejoin="round"/></svg><div class="t" style="left:1927.50px;top:289.79px;font-size:20.5px;line-height:25px;color:#ebe6e7;font-weight:400;">S</div><div class="t" style="left:1837.50px;top:332.39px;font-size:20.5px;line-height:25px;color:#ebe6e7;font-weight:400;">Colour</div><div style="position:absolute;left:1917.00px;top:329.80px;width:313.00px;height:29.60px;border-radius:8px;background:#6a5e62;box-shadow:inset 0 1px 0 rgba(255,255,255,0.08);"></div><div style="position:absolute;left:2204.00px;top:332.40px;width:23.70px;height:24.40px;border-radius:6px;background:linear-gradient(#2270ee,#1a5fd6);"></div><svg style="position:absolute;left:2204.00px;top:332.40px;" width="24" height="24" viewBox="0 0 24 24"><path d="M7.6 10.00 L11.85 5.80 L16.1 10.00 M7.6 14.40 L11.85 18.60 L16.1 14.40" fill="none" stroke="#fff" stroke-width="2" stroke-linecap="round" stroke-linejoin="round"/></svg><div class="t" style="left:1927.50px;top:331.99px;font-size:20.5px;line-height:25px;color:#ebe6e7;font-weight:400;">Green</div><div style="position:absolute;left:1839.60px;top:374.60px;width:391.90px;height:1.60px;background:#4b3e44;"></div><div class="t" style="left:1837.50px;top:386.39px;font-size:20.5px;line-height:25px;color:#eae4e5;font-weight:400;">Created</div><div class="t" style="right:108.50px;top:386.39px;font-size:20.5px;line-height:25px;color:#eae4e5;font-weight:400;">20 October 2022 at 16:27</div><div class="t" style="left:1837.50px;top:416.79px;font-size:20.5px;line-height:25px;color:#eae4e5;font-weight:400;">Modified</div><div class="t" style="right:108.50px;top:416.79px;font-size:20.5px;line-height:25px;color:#eae4e5;font-weight:400;">6 December 2022 at 16:58</div><div style="position:absolute;left:1839.00px;top:458.00px;width:21.80px;height:21.30px;border-radius:5px;background:linear-gradient(#2270ee,#1a5fd6);"></div><svg style="position:absolute;left:1839.00px;top:458.00px;" width="22" height="21" viewBox="0 0 22 21"><path d="M5.2 11L9 15.2L16.4 5.6" fill="none" stroke="#fff" stroke-width="2.5" stroke-linecap="round" stroke-linejoin="round"/></svg><div class="t" style="left:1868.00px;top:456.89px;font-size:20.5px;line-height:25px;color:#e8e3e4;font-weight:400;">Show Task List</div><div style="position:absolute;left:1839.00px;top:496.00px;width:21.80px;height:21.30px;border-radius:5px;background:linear-gradient(#574b4f,#625659);box-shadow:inset 0 0 0 1px rgba(255,255,255,0.05);"></div><div class="t" style="left:1868.00px;top:495.59px;font-size:20.5px;line-height:25px;color:#e8e3e4;font-weight:400;">Has Due Date</div><div style="position:absolute;left:1839.00px;top:534.80px;width:21.80px;height:21.30px;border-radius:5px;background:linear-gradient(#574b4f,#625659);box-shadow:inset 0 0 0 1px rgba(255,255,255,0.05);"></div><div class="t" style="left:1868.00px;top:534.39px;font-size:20.5px;line-height:25px;color:#e8e3e4;font-weight:400;">Archived</div><div style="position:absolute;left:693.75px;top:165.2px;width:1066.45px;height:998.8px;border-radius:40px;box-shadow:0 3px 18px rgba(0,0,0,0.28);"></div><div style="position:absolute;left:693.75px;top:165.2px;width:1066.45px;height:998.8px;border-radius:40px;overflow:hidden;background:radial-gradient(circle at 19.25px 19.25px, rgba(255,255,255,0.07) 2.2px, transparent 2.9px) 27.9px 37.3px/38.5px 38.5px, linear-gradient(70deg,#c2eabb 0%,#ade2a5 28%,#95d88c 52%,#7bd070 78%,#64c758 100%);"><div style="position:absolute;left:0;top:163.60000000000002px;width:100%;bottom:0;border-radius:40px 40px 0 0;background:linear-gradient(to top right,#5e615c 0%,#555c53 45%,#4a5a47 75%,#425a3f 100%);box-shadow:0 -6px 14px rgba(0,0,0,0.10);"></div></div><div class="t" style="left:730.17px;width:1000px;text-align:center;top:198.92px;font-size:73.5px;line-height:88px;color:#ffffff;font-weight:400;transform:scaleX(0.935);-webkit-text-stroke:0;">Main Menu</div><div style="position:absolute;left:706.00px;top:340.80px;width:1041.30px;height:331.20px;border-radius:30px;background:linear-gradient(to right,rgba(255,255,255,0.075),rgba(255,255,255,0.015));"></div><div style="position:absolute;left:706.00px;top:406.00px;width:1041.30px;height:266.00px;border-radius:0 0 30px 30px;background:linear-gradient(to right,rgba(128,124,128,0.05),rgba(128,124,128,0.22));"></div><div class="t" style="left:724.65px;width:1000px;text-align:center;top:352.89px;font-size:35.5px;line-height:43px;color:#eeeeee;font-weight:400;letter-spacing:-0.6px;-webkit-text-stroke:0;">Tasks</div><div style="position:absolute;left:716.10px;top:427.10px;width:21.80px;height:21.80px;border-radius:4px;background:#5ac94e;"></div><svg style="position:absolute;left:716.10px;top:427.10px;" width="22" height="22" viewBox="0 0 22 22"><path d="M5.5 11.5L9.3 16.2L16.2 5.8" fill="none" stroke="#111" stroke-width="2.3" stroke-linecap="round" stroke-linejoin="round"/></svg><div class="t" style="left:760.50px;top:425.59px;font-size:20.5px;line-height:25px;color:#ececec;font-weight:400;text-decoration:line-through;text-decoration-thickness:2px;">Difficulty level</div><div style="position:absolute;left:716.10px;top:485.20px;width:21.80px;height:21.80px;border-radius:4px;box-shadow:inset 0 0 0 2px #bfc2bd;"></div><div class="t" style="left:760.50px;top:483.69px;font-size:20.5px;line-height:25px;color:#ececec;font-weight:400;">Music toggle</div><div style="position:absolute;left:716.10px;top:551.20px;width:21.80px;height:21.80px;border-radius:4px;box-shadow:inset 0 0 0 2px #bfc2bd;"></div><div class="t" style="left:760.50px;top:549.69px;font-size:20.5px;line-height:25px;color:#ececec;font-weight:400;">Sound FX toggle</div><div style="position:absolute;left:716.10px;top:616.40px;width:21.80px;height:21.80px;border-radius:4px;background:#5ac94e;"></div><svg style="position:absolute;left:716.10px;top:616.40px;" width="22" height="22" viewBox="0 0 22 22"><path d="M5.5 11.5L9.3 16.2L16.2 5.8" fill="none" stroke="#111" stroke-width="2.3" stroke-linecap="round" stroke-linejoin="round"/></svg><div class="t" style="left:760.50px;top:614.89px;font-size:20.5px;line-height:25px;color:#ececec;font-weight:400;text-decoration:line-through;text-decoration-thickness:2px;">Highlight enemy name in red</div><div style="position:absolute;left:712.90px;top:466.45px;width:1027.10px;height:1.50px;background:rgba(150,158,146,0.35);"></div><div style="position:absolute;left:712.90px;top:532.05px;width:1027.10px;height:1.50px;background:rgba(150,158,146,0.35);"></div><div style="position:absolute;left:712.90px;top:597.65px;width:1027.10px;height:1.50px;background:rgba(150,158,146,0.35);"></div><div class="t" style="left:721.00px;top:678.23px;font-size:30.5px;line-height:37px;color:#eeeeee;font-weight:700;letter-spacing:-1.1px;-webkit-text-stroke:0;">Intro</div><div class="t" style="left:722.00px;top:731.66px;font-size:20.6px;line-height:25px;color:#e9e9e9;font-weight:400;">The into text with the enemy name highlighting.</div><div class="t" style="left:721.00px;top:789.53px;font-size:30.5px;line-height:37px;color:#eeeeee;font-weight:700;letter-spacing:-1.1px;-webkit-text-stroke:0;">Options</div><div class="t" style="left:722.00px;top:842.36px;font-size:20.6px;line-height:25px;color:#e9e9e9;font-weight:400;">The difficulty options:</div><div style="position:absolute;left:743.50px;top:908.50px;width:4.00px;height:4.00px;border-radius:50%;background:#e8e8e8;"></div><div class="t" style="left:760.50px;top:897.36px;font-size:20.6px;line-height:25px;color:#e9e9e9;font-weight:400;">Cadet</div><div style="position:absolute;left:743.50px;top:943.50px;width:4.00px;height:4.00px;border-radius:50%;background:#e8e8e8;"></div><div class="t" style="left:760.50px;top:932.36px;font-size:20.6px;line-height:25px;color:#e9e9e9;font-weight:400;">Lieutenant</div><div style="position:absolute;left:743.50px;top:978.50px;width:4.00px;height:4.00px;border-radius:50%;background:#e8e8e8;"></div><div class="t" style="left:760.50px;top:967.36px;font-size:20.6px;line-height:25px;color:#e9e9e9;font-weight:400;">Captain</div><div style="position:absolute;left:743.50px;top:1013.50px;width:4.00px;height:4.00px;border-radius:50%;background:#e8e8e8;"></div><div class="t" style="left:760.50px;top:1002.36px;font-size:20.6px;line-height:25px;color:#e9e9e9;font-weight:400;">Admiral</div><div class="t" style="left:721.00px;top:1059.33px;font-size:30.5px;line-height:37px;color:#eeeeee;font-weight:700;letter-spacing:-1.1px;-webkit-text-stroke:0;">Other</div><div class="t" style="left:722.00px;top:1112.66px;font-size:20.6px;line-height:25px;color:#e9e9e9;font-weight:400;">Should we add the ability to see the leaderboard here?</div>
</body></html>
